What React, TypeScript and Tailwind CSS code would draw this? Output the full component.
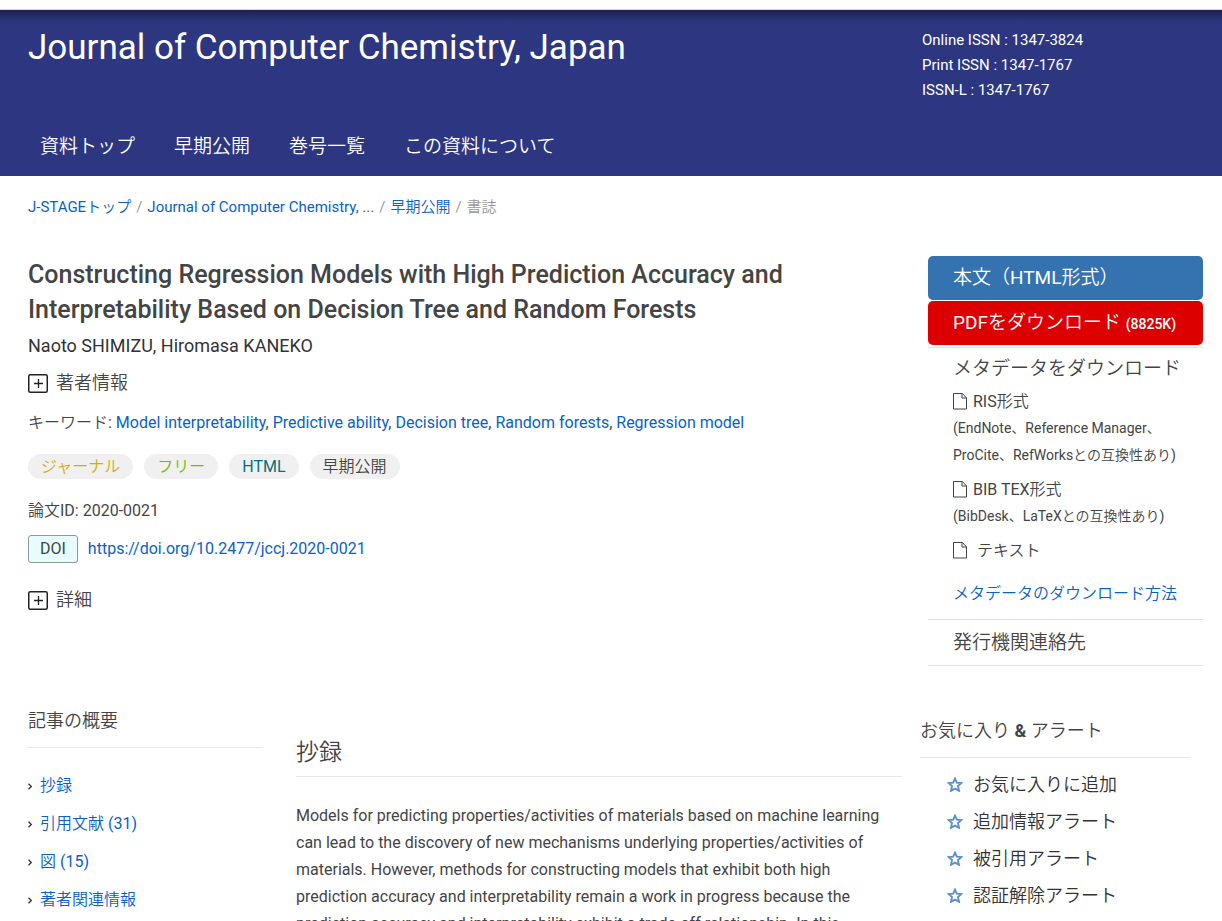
import type { ReactNode } from "react";

const navItems = ["資料トップ", "早期公開", "巻号一覧", "この資料について"];

const keywords = [
  "Model interpretability",
  "Predictive ability",
  "Decision tree",
  "Random forests",
  "Regression model",
];

const tags = [
  { label: "ジャーナル", color: "text-[#d3ae00]" },
  { label: "フリー", color: "text-[#7ab800]" },
  { label: "HTML", color: "text-[#00727a]" },
  { label: "早期公開", color: "text-[#444444]" },
];

const outline = ["抄録", "引用文献 (31)", "図 (15)", "著者関連情報"];

const alerts = [
  "お気に入りに追加",
  "追加情報アラート",
  "被引用アラート",
  "認証解除アラート",
];

function PlusBox() {
  return (
    <svg width="20" height="19" viewBox="0 0 20 19" fill="none" aria-hidden="true">
      <rect x="0.75" y="0.75" width="18.5" height="17.5" rx="1.5" stroke="#222" strokeWidth="1.5" />
      <path d="M10.5 5v9M6 9.5h9" stroke="#222" strokeWidth="1.3" />
    </svg>
  );
}

function FileIcon() {
  return (
    <svg width="14" height="17" viewBox="0 0 14 17" fill="none" stroke="#444" aria-hidden="true">
      <path d="M.5.5h9l4 4.500v11H.5z" />
      <path d="M9 .5v4.500h4.500" />
    </svg>
  );
}

function StarIcon() {
  return (
    <svg width="16" height="15" viewBox="0 0 16 15" fill="none" aria-hidden="true">
      <path
        d="M8 1.600l1.800 4 4.500.5-3.300 3 1 4.700L8 11.600l-4 2.200 1-4.700-3.300-3 4.500-.5z"
        stroke="#5b8fc7"
        strokeWidth="1.900"
      />
    </svg>
  );
}

function Chevron() {
  return (
    <svg width="4" height="7" viewBox="0 0 4 7" fill="none" aria-hidden="true">
      <path d="M.5.7L3.300 3.500.5 6.300" stroke="#333" strokeWidth="1.300" />
    </svg>
  );
}

function Expander({ children }: { children: ReactNode }) {
  return (
    <button type="button" className="flex items-center gap-2 text-[18px] leading-[26px]">
      <PlusBox />
      {children}
    </button>
  );
}

function MetaLink({ children }: { children: ReactNode }) {
  return (
    <a href="#" className="flex items-center gap-[6px] text-[16px] leading-[27px]">
      <FileIcon />
      {children}
    </a>
  );
}

function Header() {
  return (
    <header className="mt-[9px] border-t border-[#d8d8d8]">
      <div className="flex h-[166px] flex-col justify-between bg-[#2d3680] bg-linear-to-b from-[#1c2350] to-[#2d3680] to-[12px] text-white">
        <div className="flex justify-between pt-[18px] pl-7">
          <h1 className="text-[35px] leading-[40px]">Journal of Computer Chemistry, Japan</h1>
          <ul className="w-[300px] text-[15px] leading-[25px]">
            <li>Online ISSN : 1347-3824</li>
            <li>Print ISSN : 1347-1767</li>
            <li>ISSN-L : 1347-1767</li>
          </ul>
        </div>
        <nav className="flex gap-[39px] pb-[15px] pl-10 text-[19px] leading-[28px]">
          {navItems.map((item) => (
            <a key={item} href="#">
              {item}
            </a>
          ))}
        </nav>
      </div>
    </header>
  );
}

function Breadcrumb() {
  return (
    <nav className="flex gap-[5px] pt-[19px] pl-7 text-[15px] leading-[25px] text-[#999999]">
      <a href="#" className="text-[#0a5fc8]">J-STAGEトップ</a>
      <span>/</span>
      <a href="#" className="text-[#0a5fc8]">Journal of Computer Chemistry, ...</a>
      <span>/</span>
      <a href="#" className="text-[#0a5fc8]">早期公開</a>
      <span>/</span>
      <span>書誌</span>
    </nav>
  );
}

function Article() {
  return (
    <section className="min-w-0 flex-1 pt-px">
      <h2 className="text-[25px] leading-[35px] font-medium">
        Constructing Regression Models with High Prediction Accuracy and Interpretability Based on
        Decision Tree and Random Forests
      </h2>
      <p className="mt-[6px] text-[18px] leading-[26px] text-[#333333]">Naoto SHIMIZU, Hiromasa KANEKO</p>
      <div className="mt-[11px]">
        <Expander>著者情報</Expander>
      </div>
      <p className="mt-[14px] text-[16px] leading-[26px]">
        キーワード:{" "}
        {keywords.map((word, i) => (
          <span key={word}>
            {i > 0 && ", "}
            <a href="#" className="text-[#0a5fc8]">{word}</a>
          </span>
        ))}
      </p>
      <ul className="mt-[18px] flex gap-[11px] text-[16px] leading-[25px]">
        {tags.map((tag) => (
          <li key={tag.label} className={`rounded-full bg-[#f0f0f0] px-[13px] ${tag.color}`}>
            {tag.label}
          </li>
        ))}
      </ul>
      <p className="mt-[19px] text-[16px] leading-[26px]">論文ID: 2020-0021</p>
      <div className="mt-[11px] flex items-center gap-[10px] text-[16px] leading-[26px]">
        <span className="rounded-[3px] border border-[#8f999c] bg-[#e8fbff] px-[11px]">DOI</span>
        <a href="#" className="text-[#0a5fc8]">https://doi.org/10.2477/jccj.2020-0021</a>
      </div>
      <div className="mt-6">
        <Expander>詳細</Expander>
      </div>
    </section>
  );
}

function Downloads() {
  return (
    <aside className="w-[275px] shrink-0">
      <a href="#" className="flex h-11 items-center rounded-[5px] bg-[#3572b0] pl-[25px] text-[19px] text-white">
        本文（HTML形式）
      </a>
      <a
        href="#"
        className="mt-px flex h-11 items-center rounded-[5px] bg-[#dc0000] pl-[25px] text-[19px] text-white"
      >
        <span>
          PDFをダウンロード <span className="text-[14px] font-medium">(8825K)</span>
        </span>
      </a>
      <div className="mt-[2px] border-y border-[#e2e2e2] pt-[7px] pb-3 pl-[25px]">
        <h3 className="text-[19px] leading-[28px]">メタデータをダウンロード</h3>
        <ul className="mt-[5px] flex flex-col gap-[7px]">
          <li>
            <MetaLink>RIS形式</MetaLink>
            <p className="text-[14px] leading-[27px]">
              (EndNote、Reference Manager、
              <br />
              ProCite、RefWorksとの互換性あり)
            </p>
          </li>
          <li>
            <MetaLink>BIB TEX形式</MetaLink>
            <p className="text-[14px] leading-[27px]">(BibDesk、LaTeXとの互換性あり)</p>
          </li>
          <li>
            <MetaLink>{"\u00a0テキスト"}</MetaLink>
          </li>
        </ul>
        <a href="#" className="mt-4 block text-[16px] leading-[27px] text-[#0a5fc8]">
          メタデータのダウンロード方法
        </a>
      </div>
      <a href="#" className="block border-b border-[#e2e2e2] pl-[25px] text-[19px] leading-[45px]">
        発行機関連絡先
      </a>
    </aside>
  );
}

function Outline() {
  return (
    <nav className="w-[235px] shrink-0">
      <h2 className="border-b border-[#e8e8e8] pb-3 text-[18px] leading-[28px]">記事の概要</h2>
      <ul className="mt-[19px]">
        {outline.map((item) => (
          <li key={item} className="flex items-center gap-2 text-[16px] leading-[38px]">
            <Chevron />
            <a href="#" className="text-[#0a5fc8]">{item}</a>
          </li>
        ))}
      </ul>
    </nav>
  );
}

function Abstract() {
  return (
    <section className="min-w-0 flex-1 pt-[29px]">
      <h2 className="border-b border-[#e8e8e8] pb-[6px] text-[23px] leading-[34px]">抄録</h2>
      <p className="mt-[25px] text-[16px] leading-[27px]">
        Models for predicting properties/activities of materials based on machine learning can lead to
        the discovery of new mechanisms underlying properties/activities of materials. However, methods
        for constructing models that exhibit both high prediction accuracy and interpretability remain a
        work in progress because the prediction accuracy and interpretability exhibit a trade-off
        relationship. In this
      </p>
    </section>
  );
}

function Alerts() {
  return (
    <aside className="mr-3 w-[271px] shrink-0 pt-[10px]">
      <h2 className="border-b border-[#e8e8e8] pb-3 text-[18px] leading-[28px]">
        お気に入り <b className="font-bold">&amp;</b> アラート
      </h2>
      <ul className="mt-2 pl-[27px]">
        {alerts.map((item) => (
          <li key={item} className="text-[18px] leading-[37px]">
            <a href="#" className="flex items-center gap-[10px] text-[#333333]">
              <StarIcon />
              {item}
            </a>
          </li>
        ))}
      </ul>
    </aside>
  );
}

export default function App() {
  return (
    <div
      className="h-screen overflow-y-auto bg-white font-[Roboto,'Noto_Sans_CJK_JP_DemiLight','Noto_Sans_CJK_JP_Light','Noto_Sans_CJK_JP',sans-serif] text-[#444444] [scrollbar-width:none]"
      lang="ja"
    >
      <Header />
      <Breadcrumb />
      <main className="pt-[36px] pr-[19px] pl-7">
        <div className="flex items-start gap-[26px]">
          <Article />
          <Downloads />
        </div>
        <div className="mt-[41px] flex items-start">
          <Outline />
          <div className="ml-[33px] flex min-w-0 flex-1 items-start gap-[18px]">
            <Abstract />
            <Alerts />
          </div>
        </div>
      </main>
    </div>
  );
}
